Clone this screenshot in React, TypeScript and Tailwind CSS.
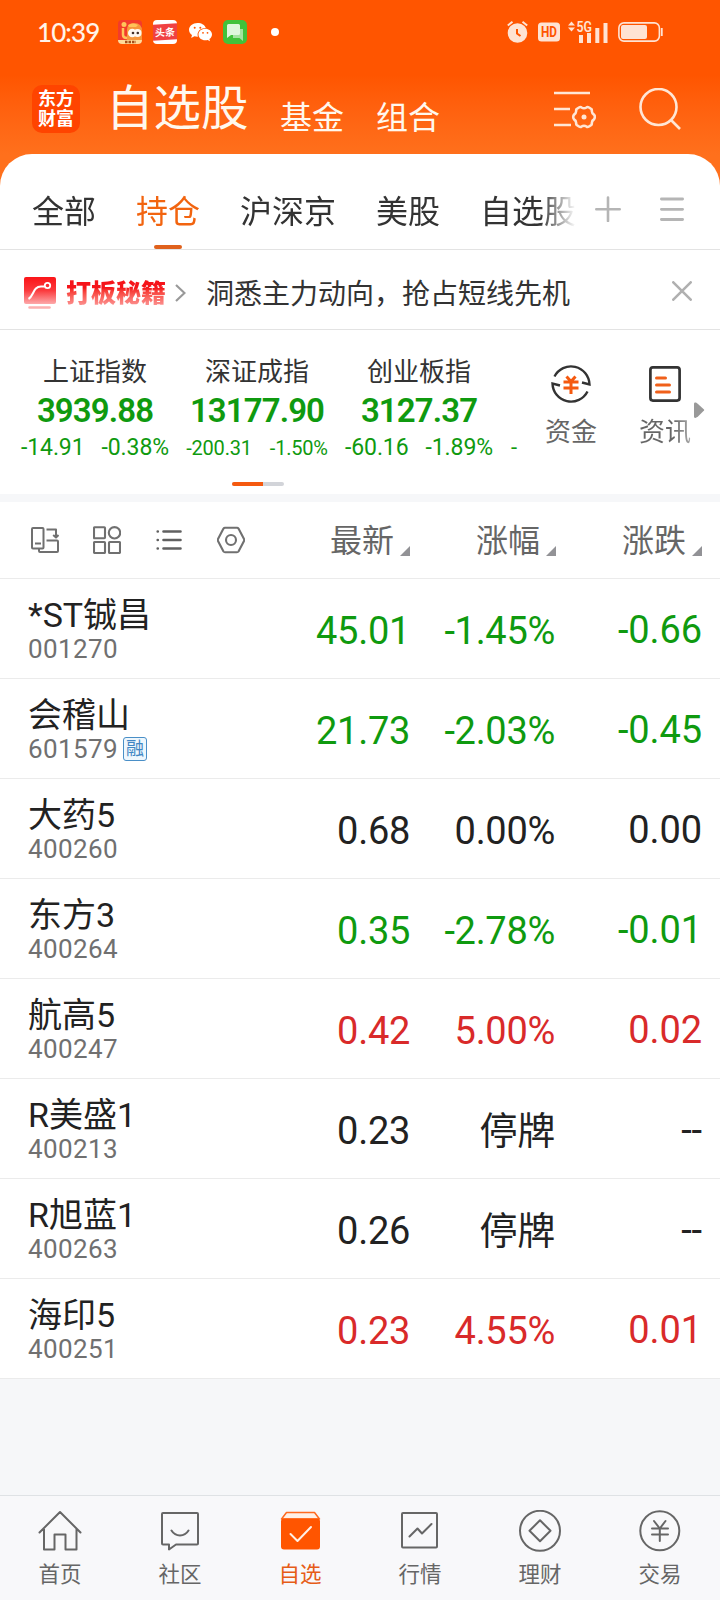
import type { ReactNode } from "react";
import clsx from "clsx";

const TABS = ["全部", "持仓", "沪深京", "美股", "自选股"];

const INDICES = [
  { name: "上证指数", value: "3939.88", change: "-14.91", percent: "-0.38%", small: false },
  { name: "深证成指", value: "13177.90", change: "-200.31", percent: "-1.50%", small: true },
  { name: "创业板指", value: "3127.37", change: "-60.16", percent: "-1.89%", small: false },
];

type Trend = "up" | "down" | "flat";

const STOCKS: { name: string; code: string; price: string; percent: string; change: string; trend: Trend; margin?: boolean }[] = [
  { name: "*ST铖昌", code: "001270", price: "45.01", percent: "-1.45%", change: "-0.66", trend: "down" },
  { name: "会稽山", code: "601579", price: "21.73", percent: "-2.03%", change: "-0.45", trend: "down", margin: true },
  { name: "大药5", code: "400260", price: "0.68", percent: "0.00%", change: "0.00", trend: "flat" },
  { name: "东方3", code: "400264", price: "0.35", percent: "-2.78%", change: "-0.01", trend: "down" },
  { name: "航高5", code: "400247", price: "0.42", percent: "5.00%", change: "0.02", trend: "up" },
  { name: "R美盛1", code: "400213", price: "0.23", percent: "停牌", change: "--", trend: "flat" },
  { name: "R旭蓝1", code: "400263", price: "0.26", percent: "停牌", change: "--", trend: "flat" },
  { name: "海印5", code: "400251", price: "0.23", percent: "4.55%", change: "0.01", trend: "up" },
];

const TREND_COLOR: Record<Trend, string> = {
  up: "text-[#d92a2a]",
  down: "text-[#0f9a0f]",
  flat: "text-[#222222]",
};

const NAV_ITEMS: { label: string; icon: ReactNode; active?: boolean }[] = [
  {
    label: "首页",
    icon: <path d="M1.5 22.5 22 2l20.500 20.500M6 19v20.500h10.500V24.500h11V39.500H38.500V19" />,
  },
  {
    label: "社区",
    icon: <path d="M5 3h34a1 1 0 0 1 1 1v29.500a1 1 0 0 1-1 1H18l-7 5v-5H5a1 1 0 0 1-1-1V4a1 1 0 0 1 1-1ZM13.500 20.500c4 6.500 13 6.500 17 0" />,
  },
  {
    label: "自选",
    active: true,
    icon: (
      <>
        <path d="M8.500 2.500h28l5 6.500H3.500Z" fill="#fff0e6" stroke="#ff6a1f" strokeWidth="1.500" />
        <rect x="3" y="8.500" width="39" height="31" rx="3" fill="#ff5500" stroke="none" />
        <path d="m12.500 24 7 7L33 17" stroke="#fff0e6" />
      </>
    ),
  },
  {
    label: "行情",
    icon: <path d="M5 3h33a1 1 0 0 1 1 1v32.500a1 1 0 0 1-1 1H5a1 1 0 0 1-1-1V4a1 1 0 0 1 1-1ZM11.500 26.500l8-8 4.500 5 9.500-9.500" />,
  },
  {
    label: "理财",
    icon: (
      <>
        <circle cx="22" cy="20.800" r="20" />
        <path d="m22 10.300 10.500 10.500L22 31.300 11.500 20.800Z" />
      </>
    ),
  },
  {
    label: "交易",
    icon: (
      <>
        <circle cx="21.800" cy="20.800" r="19.500" />
        <path d="m16 11 5.800 7.500L27.500 11M21.800 18.500v12.500M14 18.500h16M14 24.500h16" />
      </>
    ),
  },
];

const StatusBar = () => (
  <div className="flex h-16 items-center pr-[57px] pl-[37px]">
    <span className="w-[81px] font-['Lato'] text-[26px] leading-none font-medium tracking-[-0.9px] text-[#fff3ea]">10:39</span>
    {/* Notification icons */}
    <svg className="h-6 w-6" viewBox="0 0 24 24">
      <rect width="24" height="24" rx="4" fill="#f33b2b" />
      <circle cx="6" cy="4.500" r="2.500" fill="#ffc35a" />
      <path d="M9 19V10Q9 3 16 3q8 0 8 8v9H9Z" fill="#f7973c" />
      <path d="M10 5q5-3 10 0l-2 2h-7Z" fill="#ffc35a" />
      <path d="M5 8v7q0 3 4 3" stroke="#ffc35a" strokeWidth="2.500" fill="none" />
      <circle cx="14.300" cy="13" r="4.300" fill="#fff8f0" />
      <circle cx="19.500" cy="13" r="4" fill="#fff8f0" />
      <circle cx="15" cy="13" r="1.300" fill="#443028" />
      <circle cx="19.800" cy="13" r="1.300" fill="#443028" />
      <path d="M0 20h24q0 4-4 4H4q-4 0-4-4Z" fill="#ffdc9a" />
      <path d="M7 22h11" stroke="#a4501c" strokeWidth="2.500" strokeDasharray="2.500 1" />
    </svg>
    <div className="ml-[11px] flex h-6 w-6 items-center overflow-hidden rounded-[4px] bg-white">
      <span className="flex h-4 w-6 -skew-y-3 items-center justify-center bg-[#f04142] text-[10px] font-bold text-white">头条</span>
    </div>
    <svg className="ml-3 h-6 w-[23px]" viewBox="0 0 23 24" fill="#fff">
      <path d="M8.500 3C3.800 3 0 6 0 9.800c0 2.100 1.200 4 3 5.200l-.8 3 3.200-1.700c1 .3 2 .4 3 .4h.5C7.500 12 11 8 16.500 8h.3C16 5 12.700 3 8.500 3Z" />
      <path d="M23 14.500c0-3.300-3.200-5.700-6.800-5.700s-6.700 2.400-6.700 5.700 3 5.800 6.700 5.800c.9 0 1.700-.1 2.500-.4l2.300 1.300-.6-2.200c1.600-1 2.600-2.700 2.600-4.500Z" />
      <g fill="#ff5500">
        <circle cx="5.700" cy="7.800" r="1" />
        <circle cx="11.300" cy="7.800" r="1" />
        <circle cx="14" cy="12.800" r=".9" />
        <circle cx="18.500" cy="12.800" r=".9" />
      </g>
    </svg>
    <svg className="ml-[11px] h-6 w-6" viewBox="0 0 24 24">
      <rect width="24" height="24" rx="5" fill="#42c23a" />
      <path d="M10 9h10v12l-3.500-3H10Z" fill="#a5e39f" />
      <path d="M5.500 4h10q1.500 0 1.500 1.500v8q0 1.500-1.500 1.500H8l-4 3V5.500Q4 4 5.500 4Z" fill="#dff7dc" />
    </svg>
    <span className="ml-6 h-2 w-2 rounded-full bg-white" />

    {/* System indicators */}
    <svg className="ml-auto h-[22px] w-[21px]" viewBox="0 0 21 22">
      <circle cx="10.500" cy="12" r="9.800" fill="#ffe3d3" />
      <path d="M.8 4.500 5.500.8M20.200 4.500 15.500.8" stroke="#ffe3d3" strokeWidth="2" />
      <path d="M10 8v4.500l3.500 2.500" stroke="#ff5500" strokeWidth="2" fill="none" />
    </svg>
    <svg className="ml-[10px] h-5 w-[22px]" viewBox="0 0 22 20">
      <rect y=".5" width="22" height="19" rx="3.500" fill="#ffe3d3" />
      <text x="3" y="15.300" fontSize="15" fontWeight="700" fill="#ff5500" textLength="16" lengthAdjust="spacingAndGlyphs">HD</text>
    </svg>
    <svg className="ml-2 h-[30px] w-10" viewBox="0 -4 40 30" fill="#ffe3d3">
      <path d="M0 4.500 3.500.5 7 4.500ZM0 6.500h7l-3.500 4Z" />
      <text x="8.500" y="10.500" fontSize="14" fontWeight="600" textLength="15.500" lengthAdjust="spacingAndGlyphs">5G</text>
      <path d="M11 14h4v8h-4zM19 12h4v10h-4zM27.300 7h4v15h-4zM35.500 2h4v20h-4z" />
    </svg>
    <svg className="ml-[10px] h-5 w-[45px]" viewBox="0 0 45 20">
      <rect x=".9" y=".9" width="40.500" height="18.200" rx="5" fill="none" stroke="#ffe3d3" strokeWidth="1.600" />
      <rect x="3" y="3" width="26" height="14" rx="2" fill="#ffe3d3" />
      <path d="M43.800 6v8" stroke="#ffe3d3" strokeWidth="1.800" />
    </svg>
  </div>
);

const TitleBar = () => (
  <div className="flex h-[90px] items-start pr-[38px] pl-8 text-[#fff8ee]">
    <div className="mt-[21px] flex h-12 w-12 flex-col items-center justify-center rounded-[10px] bg-[#ff4400] text-[18px] leading-5 font-bold text-white">
      <span>东方</span>
      <span>财富</span>
    </div>
    <h1 className="mt-[22px] ml-[26px] w-[140px] text-[47.500px] leading-[46px] whitespace-nowrap">自选股</h1>
    <span className="mt-[38px] ml-[34px] text-[32px] leading-8">基金</span>
    <span className="mt-[38px] ml-8 text-[32px] leading-8">组合</span>
    <svg className="mt-[26px] ml-auto h-[40px] w-[42px]" viewBox="0 0 42 40" fill="none" stroke="#ffe6d5" strokeWidth="2.600">
      <path d="M0 3h36M0 19h16M0 35h17" />
      <path
        strokeLinejoin="round"
        d="M25 17.500q1.500-1 2.500 0 2.500 1.500 5 0 1-1 2.500 0l2.300 1.500q.7.700.5 2 .2 2.500 2 3.500 1.200 1 1 2.500 0 1.500-1 2.500-1.800 1-2 3.500.2 1.300-.5 2L35 36.500q-1.500 1-2.500 0-2.500-1.500-5 0-1 1-2.500 0L22.700 35q-.7-.7-.5-2-.2-2.500-2-3.500-1-1-1-2.500t1-2.500q1.800-1 2-3.500-.2-1.300.5-2Z"
      />
      <circle cx="30" cy="27" r="2.500" fill="#ffe6d5" stroke="none" />
    </svg>
    <svg className="mt-6 ml-[42px] h-[42px] w-[44px]" viewBox="0 0 44 42" fill="none" stroke="#ffe6d5" strokeWidth="2.600">
      <circle cx="20.500" cy="19" r="18" />
      <path d="m32.500 31.500 9.500 9.500" />
    </svg>
  </div>
);

const TabBar = () => (
  <div className="flex h-24 items-start border-b border-[#e3e3e3] pl-8">
    <div className="flex h-[95px] w-[544px] gap-10 overflow-hidden [mask-image:linear-gradient(to_right,black_508px,transparent_544px)]">
      {TABS.map((tab, i) => (
        <div
          key={tab}
          className={clsx("flex shrink-0 flex-col items-center text-[32px] leading-8", i === 1 ? "text-[#f2640f]" : "text-[#333333]")}
        >
          <span className="mt-[42px]">{tab}</span>
          {i === 1 && <span className="mt-auto h-1 w-7 rounded-full bg-[#e0611c]" />}
        </div>
      ))}
    </div>
    <svg className="mt-[42px] ml-[19px] h-[26px] w-[26px]" viewBox="0 0 26 26" stroke="#b5b5b5" strokeWidth="2.600" strokeLinecap="round">
      <path d="M1.300 13.300h23.400M13 1.500v23.400" />
    </svg>
    <svg className="mt-[43px] ml-[39px] h-6 w-6" viewBox="0 0 24 24" stroke="#b5b5b5" strokeWidth="2.800" strokeLinecap="round">
      <path d="M1.400 2h21.200M1.400 12.300h21.200M1.400 22.500h21.200" />
    </svg>
  </div>
);

const Banner = () => (
  <div className="flex h-20 items-center border-b border-[#e3e3e3] pr-7 pl-6">
    <svg className="mt-1.5 h-8 w-8" viewBox="0 0 32 32" fill="none">
      <defs>
        <linearGradient id="promo" x1="0" y1="0" x2="0" y2="1">
          <stop offset="0" stopColor="#fb1418" />
          <stop offset="0.500" stopColor="#fb3a3d" />
          <stop offset="1" stopColor="#fda9aa" />
        </linearGradient>
      </defs>
      <rect width="32" height="27" rx="2" fill="url(#promo)" />
      <path d="M4.500 22C10 19 9 9.500 17 9.500h3.500" stroke="#fff" strokeWidth="2" />
      <circle cx="23.500" cy="8.500" r="2.700" stroke="#fff" strokeWidth="1.800" />
      <path d="M5.500 30.500h20" stroke="#fcb0b0" strokeWidth="2.500" strokeLinecap="round" />
    </svg>
    <span className="mt-2 ml-[10px] w-[100px] bg-linear-to-b from-[#f5141a] from-30% to-[#fb9a9c] to-95% bg-clip-text text-[25px] leading-[30px] font-black text-transparent">打板秘籍</span>
    <svg className="mt-1.5 ml-[9px] h-[18px] w-[11px]" viewBox="0 0 11 18" fill="none" stroke="#999999" strokeWidth="2.200">
      <path d="m1 1 8.500 8L1 17" />
    </svg>
    <span className="mt-2.5 ml-5 text-[28px] leading-7 text-[#333333]">洞悉主力动向，抢占短线先机</span>
    <svg className="mt-0.5 ml-auto h-5 w-5" viewBox="0 0 20 20" stroke="#b0b0b0" strokeWidth="2.600" strokeLinecap="round">
      <path d="m1.300 1.300 17.400 17.400M18.700 1.300 1.300 18.700" />
    </svg>
  </div>
);

const IndexPanel = () => (
  <div className="flex h-[164px] flex-col">
    <div className="flex h-[152px] pl-[14px]">
      <div className="flex w-[508px] overflow-hidden">
        {INDICES.map((item) => (
          <div key={item.name} className="flex w-[162px] shrink-0 flex-col items-center pt-7">
            <span className="text-[26px] leading-7 text-[#333333]">{item.name}</span>
            <span className="mt-[9px] text-[33px] leading-8 font-semibold tracking-[-0.9px] text-[#0f9a0f]">{item.value}</span>
            <span
              className={clsx(
                "mt-[9px] flex leading-6 whitespace-nowrap text-[#0f9a0f]",
                item.small ? "gap-[18px] text-[20px] tracking-[-0.2px]" : "gap-[17px] text-[23px] tracking-[-0.1px]"
              )}
            >
              <span>{item.change}</span>
              <span>{item.percent}</span>
            </span>
          </div>
        ))}
        <span className="mt-[106px] ml-[11px] text-[22px] leading-6 text-[#0f9a0f]">-</span>
      </div>
      <div className="ml-[22px] flex w-[54px] flex-col items-center pt-[34px]">
        <svg className="h-10 w-10" viewBox="0 0 40 40" fill="none" stroke="#333333" strokeWidth="2.400">
          <path d="M3.500 12.500A18.500 18.500 0 0 1 38.500 20.500L31 18.500M36.500 27.500A18.500 18.500 0 0 1 1.500 19.500L9 21.500" />
          <path d="m15.500 12.500 4.500 5 4.500-5M20 17.500V30M12.500 18h15M12.500 24h15" stroke="#f5590f" strokeWidth="3" />
        </svg>
        <span className="mt-[14px] text-[26px] leading-7 text-[#666666]">资金</span>
      </div>
      <div className="ml-10 flex w-[54px] flex-col items-center pt-9">
        <svg className="h-9 w-8" viewBox="0 0 32 36" fill="none" stroke="#333333" strokeWidth="2.700">
          <rect x="1.400" y="1.400" width="29.200" height="33.200" rx="2.500" />
          <path d="M7.500 12h9M7.500 19h13M7.500 26h13" stroke="#f0601a" strokeWidth="3" strokeLinecap="round" />
        </svg>
        <span className="mt-4 bg-linear-to-r from-[#666666] from-65% to-[#aaaaaa] bg-clip-text text-[26px] leading-7 text-transparent">资讯</span>
      </div>
      <svg className="mt-[71px] ml-[2px] h-[18px] w-[11px] shrink-0" viewBox="0 0 11 18">
        <path d="M0 2.500Q0 1 2 1.500l2 1.500 6 5.500q.5.500 0 1L4 15.500 1.500 17Q0 17 0 15.500Z" fill="#999999" />
      </svg>
    </div>
    <div className="ml-[232px] flex h-1 w-[52px] overflow-hidden rounded-full bg-[#d2d4d9]">
      <span className="w-[31px] bg-[#f5590f]" />
    </div>
  </div>
);

const SortHeader = ({ label }: { label: string }) => (
  <span className="flex items-end justify-end gap-1.5 pt-0.5 text-[32px] leading-8 text-[#666666]">
    {label}
    <svg className="mb-px h-[10px] w-[10px]" viewBox="0 0 10 10">
      <path d="M10 0v10H0Z" fill="#929296" />
    </svg>
  </span>
);

const ListHeader = () => (
  <div className="flex h-[77px] items-center border-b border-[#ebebeb] pl-[31px]">
    <svg className="h-7 w-7" viewBox="0 0 28 28" fill="none" stroke="#707070" strokeWidth="2" strokeLinejoin="round">
      <path d="M2 2h9.500q1 0 1 1v18.500q0 1-1 1H2q-1 0-1-1V3q0-1 1-1ZM4 17.500h6" />
      <path d="M15.500 3.500H25v8M22.200 9l2.800 2.500L27.500 9M15.500 14.500H26q1 0 1 1V25q0 1-1 1H9q-1 0-1-1v-2" />
    </svg>
    <svg className="ml-[34px] h-7 w-7" viewBox="0 0 28 28" fill="none" stroke="#707070" strokeWidth="2.100">
      <rect x="1" y="1.300" width="11" height="11" rx=".7" />
      <circle cx="21.500" cy="6.800" r="5.700" />
      <rect x="1" y="16" width="11" height="11" rx=".7" />
      <rect x="16" y="16" width="11" height="11" rx=".7" />
    </svg>
    <svg className="ml-[35px] h-[22px] w-[26px]" viewBox="0 0 26 22" stroke="#606060" strokeWidth="2.600" strokeLinecap="round">
      <path d="M7.500 2.500h17M7.500 11h17M7.500 19.500h17M1.700 2.500h.1M1.700 11h.1M1.700 19.500h.1" />
    </svg>
    <svg className="ml-[35px] h-7 w-7" viewBox="0 0 28 28" fill="none" stroke="#707070" strokeWidth="2.100" strokeLinejoin="round">
      <path d="M8 1.800h12q1 0 1.500.8L27 13q.5 1 0 2l-5.500 10.500q-.5.700-1.500.7H8q-1 0-1.500-.7L1 15q-.5-1 0-2L6.500 2.600Q7 1.800 8 1.800Z" />
      <circle cx="14" cy="14" r="5" />
    </svg>
    <div className="ml-auto flex pr-[18px]">
      <SortHeader label="最新" />
      <div className="w-[146px]">
        <SortHeader label="涨幅" />
      </div>
      <div className="w-[146px]">
        <SortHeader label="涨跌" />
      </div>
    </div>
  </div>
);

const StockList = () => (
  <ul>
    {STOCKS.map((stock) => (
      <li key={stock.code} className="flex h-[100px] border-b border-[#ebebeb] pl-7">
        <div className="flex w-[222px] flex-col pt-[18px]">
          <span className="text-[34px] leading-9 whitespace-nowrap text-[#222222]">{stock.name}</span>
          <span className="mt-0.5 flex items-center text-[26px] leading-[28px] tracking-[0.4px] text-[#707070]">
            {stock.code}
            {stock.margin && (
              <span className="ml-[5px] flex h-6 w-6 items-center justify-center rounded-[3px] border border-[#4a8fc7] bg-[#eef7fd] text-[18px] leading-none tracking-normal text-[#3f86c4]">
                融
              </span>
            )}
          </span>
        </div>
        <div className={clsx("flex text-right text-[38px] leading-10 tracking-[-0.3px]", TREND_COLOR[stock.trend])}>
          <span className="w-[160px] pt-8">{stock.price}</span>
          <span className="w-[145px] pt-8">{stock.percent}</span>
          <span className="w-[147px] pt-[31px] tracking-[-0.1px]">{stock.change}</span>
        </div>
      </li>
    ))}
  </ul>
);

const BottomNav = () => (
  <nav className="grid h-[105px] grid-cols-6 border-t border-[#dfe2e5] bg-[#f8f8fa]">
    {NAV_ITEMS.map(({ label, icon, active }) => (
      <div key={label} className="flex flex-col items-center pt-[14px]">
        <svg className="h-[42px] w-11" viewBox="0 0 44 42" fill="none" stroke="#666666" strokeWidth="2" strokeLinecap="round" strokeLinejoin="round">
          {icon}
        </svg>
        <span className={clsx("mt-[11px] text-[21.500px] leading-6", active ? "text-[#e65c17]" : "text-[#666666]")}>{label}</span>
      </div>
    ))}
  </nav>
);

export default function App() {
  return (
    <div className="flex h-[1600px] w-[720px] flex-col overflow-hidden bg-[#f6f7f9] font-['Roboto','Noto_Sans_CJK_SC',sans-serif]">
      <div className="bg-linear-to-b from-[#ff5500] from-30% to-[#ff701c] to-62%">
        <StatusBar />
        <TitleBar />
        <div className="rounded-t-[32px] bg-white">
          <TabBar />
        </div>
      </div>
      <div className="bg-white">
        <Banner />
        <IndexPanel />
      </div>
      <div className="mt-2 bg-white">
        <ListHeader />
        <StockList />
      </div>
      <div className="mt-auto">
        <BottomNav />
      </div>
    </div>
  );
}
